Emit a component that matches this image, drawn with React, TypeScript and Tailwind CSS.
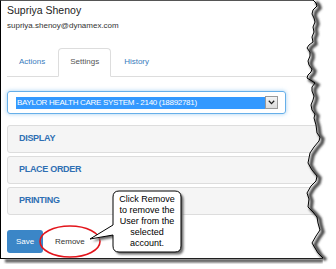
import React from "react";

const edge: [number, number][] = [
  [313, 0], [316, 3], [317, 6], [313, 10], [312, 14], [314, 18], [315, 22], [313, 27], [314, 32], [312, 37], [313, 42],
  [309, 45], [307, 48], [310, 52], [310, 56], [308, 61], [309, 65], [312, 69], [311, 72], [308, 75], [307, 78],
  [312, 81], [315, 83], [312, 87], [312, 91], [314, 96], [313, 100], [311, 105], [312, 110], [315, 114], [314, 118],
  [316, 125], [317, 133], [320, 137], [319, 141], [314, 147], [310, 153], [309, 158], [308, 163], [312, 170],
  [317, 176], [316, 181], [311, 186], [307, 193], [309, 199], [308, 207], [313, 212], [317, 217], [318, 223],
  [320, 230], [316, 236], [312, 243], [315, 248], [318, 253], [321, 256], [323, 258],
];

function TornEdge() {
  const pts = edge.map((p) => p.join(",")).join(" ");
  const shadowPts = edge.map(([x, y]) => `${x + 3},${y + 2}`).join(" ");
  return (
    <svg className="absolute left-0 top-0" width="336" height="269" viewBox="0 0 336 269">
      <defs>
        <filter id="blur1" x="-20%" y="-20%" width="140%" height="140%">
          <feGaussianBlur stdDeviation="1.2" />
        </filter>
      </defs>
      {/* bottom drop shadow */}
      <rect x="5" y="259" width="318" height="3.5" fill="#5a5a5a" filter="url(#blur1)" />
      {/* cover right of torn edge */}
      <polygon points={`${pts} 336,258 336,269 330,269 336,0`} fill="#ffffff" />
      <polygon points={`336,0 ${pts} 323,269 336,269`} fill="#ffffff" />
      <polyline points={shadowPts} fill="none" stroke="#4a4a4a" strokeWidth="3.5" filter="url(#blur1)" />
      <polyline points={pts} fill="none" stroke="#000" strokeWidth="1" />
    </svg>
  );
}

function Callout() {
  const d =
    "M 119 191 H 175 Q 181 191 181 197 V 246 Q 181 252 175 252 H 119 Q 113 252 113 246 V 235 L 90 239 L 113 225 V 197 Q 113 191 119 191 Z";
  return (
    <>
      <svg className="absolute left-0 top-0" width="336" height="269" viewBox="0 0 336 269">
        <defs>
          <filter id="blur2" x="-20%" y="-20%" width="140%" height="140%">
            <feGaussianBlur stdDeviation="1" />
          </filter>
        </defs>
        <ellipse cx="70" cy="241.5" rx="30" ry="15.5" fill="none" stroke="#e3141b" strokeWidth="1.6" />
        <path d={d} transform="translate(2.5,2.5)" fill="#6a6a6a" filter="url(#blur2)" />
        <path d={d} fill="#fff" stroke="#000" strokeWidth="1" />
      </svg>
      <div className="absolute left-[113px] top-[194px] w-[68px] text-center text-[9px] leading-[11px] text-black font-['Liberation_Sans',Arial,sans-serif]">
        Click Remove
        <br />
        to remove the
        <br />
        User from the
        <br />
        selected
        <br />
        account.
      </div>
    </>
  );
}

export default function App() {
  return (
    <div className="relative w-[336px] h-[269px] bg-white overflow-hidden font-['Liberation_Sans',Arial,sans-serif]">
      <div className="w-[336px] h-[259px] border-l border-t border-b border-l-black border-t-[#555] border-b-black overflow-hidden">
        <div className="pl-[6px] pt-[3px]">
          <div className="text-[10.5px] leading-[12px] text-[#222]">Supriya Shenoy</div>
          <div className="mt-[5px] text-[8px] leading-[10px] text-[#333]">supriya.shenoy@dynamex.com</div>

          <div className="mt-[17px] flex h-[29px] border-b border-[#ddd] text-[8px]">
            <div className="mr-[1px] -mb-px flex h-[29px] items-center border border-transparent px-[11px] pb-[2px] text-[#3a7cbd]">
              Actions
            </div>
            <div className="mr-[1px] -mb-px flex h-[29px] items-center rounded-t-[4px] border border-[#ddd] border-b-white bg-white px-[11px] pb-[2px] text-[#555]">
              Settings
            </div>
            <div className="-mb-px flex h-[29px] items-center border border-transparent px-[11px] pb-[2px] text-[#3a7cbd]">
              History
            </div>
          </div>

          <div className="mt-[14px] flex h-[23px] w-[279px] items-center rounded-[3px] border border-[#66afe9] pl-[8px] pr-[7px] shadow-[0_0_4px_rgba(102,175,233,0.6)]">
            <div className="flex h-[12px] flex-1 items-center bg-[#3399ff] pl-[1px] text-[8px] leading-[12px] tracking-[-0.3px] text-white">
              BAYLOR HEALTH CARE SYSTEM - 2140 (18892781)
            </div>
            <div className="flex h-[13px] w-[13px] items-center justify-center border border-[#9a9a9a] bg-gradient-to-b from-[#f4f4f4] to-[#dcdcdc]">
              <svg width="7" height="5" viewBox="0 0 7 5">
                <path d="M0.8 0.8 L3.5 3.6 L6.2 0.8" fill="none" stroke="#222" strokeWidth="1.3" />
              </svg>
            </div>
          </div>

          <div className="mt-[11px] flex w-[330px] flex-col gap-[3px]">
            {["DISPLAY", "PLACE ORDER", "PRINTING"].map((t) => (
              <div
                key={t}
                className="flex h-[28px] items-center rounded-[3px] border border-[#ddd] bg-[#f5f5f5] px-[11px] text-[9px] font-bold tracking-[-0.3px] text-[#2f6fb3]"
              >
                {t}
              </div>
            ))}
          </div>

          <div className="mt-[15px] flex items-center gap-[2px] text-[8px]">
            <div className="flex h-[23px] w-[36px] items-center justify-center rounded-[3px] bg-[#3b86c7] text-white">
              Save
            </div>
            <div className="flex h-[23px] items-center px-[10px] text-[#333]">Remove</div>
          </div>
        </div>
      </div>
      <TornEdge />
      <Callout />
    </div>
  );
}
